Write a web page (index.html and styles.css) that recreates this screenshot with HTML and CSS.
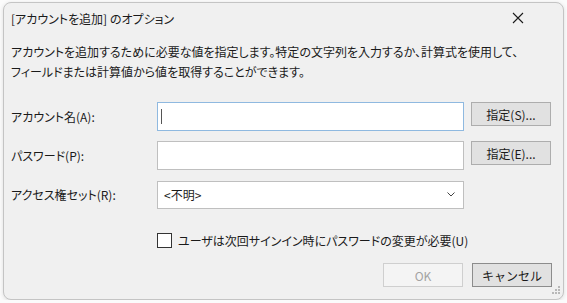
FILE: index.html
```html
<!DOCTYPE html>
<html lang="ja">
<head>
    <meta charset="UTF-8">
    <title>[アカウントを追加] のオプション</title>
    <link rel="stylesheet" href="styles.css">
</head>
<body>
    <div class="dialog">
        <header class="titlebar">
            <span class="title">[アカウントを追加] のオプション</span>
            <span class="close">
                <svg width="12" height="12" viewBox="0 0 12 12"><path d="M1 1 L11 11 M11 1 L1 11" stroke="#1a1a1a" stroke-width="1.1" fill="none"/></svg>
            </span>
        </header>

        <div class="content">
            <p class="desc">アカウントを追加するために必要な値を指定します。特定の文字列を入力するか、計算式を使用して、<br>フィールドまたは計算値から値を取得することができます。</p>

            <div class="form">
                <label class="label">アカウント名(A):</label>
                <div class="field focused"><span class="caret"></span></div>
                <button class="btn">指定(S)...</button>

                <label class="label">パスワード(P):</label>
                <div class="field"></div>
                <button class="btn">指定(E)...</button>

                <label class="label">アクセス権セット(R):</label>
                <div class="field select">
                    <span>&lt;不明&gt;</span>
                    <svg width="8" height="5" viewBox="0 0 8 5"><path d="M0.5 0.5 L4 4 L7.5 0.5" stroke="#444" stroke-width="1" fill="none"/></svg>
                </div>
                <span></span>

                <span></span>
                <label class="check"><span class="box"></span>ユーザは次回サインイン時にパスワードの変更が必要(U)</label>
            </div>

            <div class="footer">
                <button class="btn" disabled>OK</button>
                <button class="btn default">キャンセル</button>
            </div>
        </div>

        <svg class="grip" width="10" height="10" viewBox="0 0 10 10" fill="#b8b8b8">
            <rect x="8" y="0" width="2" height="2"/>
            <rect x="5" y="3" width="2" height="2"/><rect x="8" y="3" width="2" height="2"/>
            <rect x="2" y="6" width="2" height="2"/><rect x="5" y="6" width="2" height="2"/><rect x="8" y="6" width="2" height="2"/>
        </svg>
    </div>
</body>
</html>
```

FILE: styles.css
```css
/* ダイアログ全体 */
body {
    margin: 0;
    background-color: #fbfbfb;
    font-family: "Noto Sans CJK JP", "Noto Sans", sans-serif;
    font-feature-settings: "palt";
    font-size: 12px;
    color: #1a1a1a;
}

.dialog {
    position: relative;
    box-sizing: border-box;
    width: 561px;
    height: 298px;
    margin: 2px 0 0 3px;
    background-color: #f0f0f0;
    border: 1px solid #c4c4c4;
    border-radius: 8px;
    box-shadow: 0 1px 4px rgba(0, 0, 0, 0.12);
}

.titlebar {
    display: flex;
    justify-content: space-between;
    align-items: center;
    height: 30px;
    padding: 0 39px 0 7px;
}

.close {
    display: flex;
}

.content {
    padding: 0 11px 0 7px;
}

.desc {
    margin: 9px 0 0;
    line-height: 20px;
}

.form {
    display: grid;
    grid-template-columns: 139px 307px 80px;
    grid-auto-rows: 29px;
    column-gap: 7px;
    row-gap: 10px;
    align-items: center;
    margin-top: 20px;
}

.label {
    line-height: 29px;
}

.field {
    box-sizing: border-box;
    height: 29px;
    background-color: #fff;
    border: 1px solid #bfbfbf;
    display: flex;
    align-items: center;
    padding: 0 8px 0 3px;
}

.field.focused {
    border-color: #8fb9e0;
}

.caret {
    width: 1px;
    height: 15px;
    background-color: #555;
}

.field.select {
    height: 28px;
    justify-content: space-between;
    padding-left: 6px;
}

.btn {
    box-sizing: border-box;
    width: 80px;
    height: 24px;
    align-self: start;
    font-family: inherit;
    font-size: 12px;
    color: #1a1a1a;
    background-color: #e1e1e1;
    border: 1px solid #adadad;
    border-radius: 0;
    padding: 0;
}

.btn:disabled {
    background-color: #f4f4f4;
    border-color: #cfcfcf;
    color: #a3a3a3;
}

.btn.default {
    border-color: #8c8c8c;
}

.check {
    grid-column: 2 / 4;
    display: flex;
    align-items: center;
    gap: 6px;
    margin-top: 13px;
}

.box {
    width: 13px;
    height: 13px;
    background-color: #fff;
    border: 1px solid #333;
}

.footer {
    display: flex;
    justify-content: flex-end;
    gap: 9px;
    margin-top: 15px;
}

.grip {
    position: absolute;
    right: 3px;
    bottom: 3px;
}
```
